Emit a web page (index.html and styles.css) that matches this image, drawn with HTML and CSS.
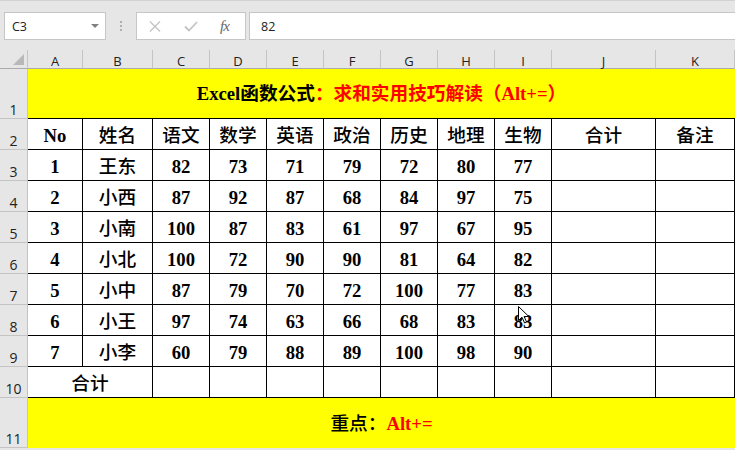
FILE: index.html
```html
<!DOCTYPE html>
<html lang="zh-CN">
<head>
    <meta charset="UTF-8">
    <title>Excel函数公式：求和实用技巧解读</title>
    <link rel="stylesheet" href="styles.css">
</head>
<body>
    <div class="top"></div>
    <div class="fbar">
        <div class="namebox"><span>C3</span><span class="arrow"></span></div>
        <div class="grip"><i></i><i></i><i></i></div>
        <div class="fxbox">
            <svg class="ico-x" width="12" height="11" viewBox="0 0 12 11"><path d="M1 0.5 L11 10.5 M11 0.5 L1 10.5" stroke="#c4c4c4" stroke-width="1.4" fill="none"/></svg>
            <svg class="ico-ok" width="14" height="11" viewBox="0 0 14 11"><path d="M1 5.5 L5 9.5 L13 1" stroke="#c4c4c4" stroke-width="1.8" fill="none"/></svg>
            <span class="fx">fx</span>
        </div>
        <div class="formula">82</div>
    </div>

    <div class="sheet">
        <div class="corner"><svg width="11" height="11" viewBox="0 0 11 11"><polygon points="11,0 11,11 0,11" fill="#b8b8b8"/></svg></div>
        <div class="ch">A</div><div class="ch">B</div><div class="ch">C</div><div class="ch">D</div><div class="ch">E</div><div class="ch">F</div>
        <div class="ch">G</div><div class="ch">H</div><div class="ch">I</div><div class="ch">J</div><div class="ch">K</div>

        <div class="rh">1</div>
        <div class="c title wide">Excel函数公式<span class="red">：求和实用技巧解读（Alt+=）</span></div>

        <div class="rh">2</div>
        <div class="c">No</div><div class="c zh">姓名</div><div class="c zh">语文</div><div class="c zh">数学</div><div class="c zh">英语</div><div class="c zh">政治</div>
        <div class="c zh">历史</div><div class="c zh">地理</div><div class="c zh">生物</div><div class="c zh">合计</div><div class="c zh">备注</div>

        <div class="rh">3</div>
        <div class="c">1</div><div class="c zh">王东</div><div class="c">82</div><div class="c">73</div><div class="c">71</div><div class="c">79</div>
        <div class="c">72</div><div class="c">80</div><div class="c">77</div><div class="c"></div><div class="c"></div>

        <div class="rh">4</div>
        <div class="c">2</div><div class="c zh">小西</div><div class="c">87</div><div class="c">92</div><div class="c">87</div><div class="c">68</div>
        <div class="c">84</div><div class="c">97</div><div class="c">75</div><div class="c"></div><div class="c"></div>

        <div class="rh">5</div>
        <div class="c">3</div><div class="c zh">小南</div><div class="c">100</div><div class="c">87</div><div class="c">83</div><div class="c">61</div>
        <div class="c">97</div><div class="c">67</div><div class="c">95</div><div class="c"></div><div class="c"></div>

        <div class="rh">6</div>
        <div class="c">4</div><div class="c zh">小北</div><div class="c">100</div><div class="c">72</div><div class="c">90</div><div class="c">90</div>
        <div class="c">81</div><div class="c">64</div><div class="c">82</div><div class="c"></div><div class="c"></div>

        <div class="rh">7</div>
        <div class="c">5</div><div class="c zh">小中</div><div class="c">87</div><div class="c">79</div><div class="c">70</div><div class="c">72</div>
        <div class="c">100</div><div class="c">77</div><div class="c">83</div><div class="c"></div><div class="c"></div>

        <div class="rh">8</div>
        <div class="c">6</div><div class="c zh">小王</div><div class="c">97</div><div class="c">74</div><div class="c">63</div><div class="c">66</div>
        <div class="c">68</div><div class="c">83</div><div class="c">83</div><div class="c"></div><div class="c"></div>

        <div class="rh">9</div>
        <div class="c">7</div><div class="c zh">小李</div><div class="c">60</div><div class="c">79</div><div class="c">88</div><div class="c">89</div>
        <div class="c">100</div><div class="c">98</div><div class="c">90</div><div class="c"></div><div class="c"></div>

        <div class="rh">10</div>
        <div class="c zh pair">合计</div><div class="c"></div><div class="c"></div><div class="c"></div><div class="c"></div>
        <div class="c"></div><div class="c"></div><div class="c"></div><div class="c"></div><div class="c"></div>

        <div class="rh">11</div>
        <div class="c foot wide"><span class="zh">重点：</span><span class="red">Alt+=</span></div>
    </div>

    <svg class="cursor" width="12" height="18" viewBox="0 0 12 18"><path d="M0.5 0.5 L0.5 14.5 L4 11.2 L6.6 17 L8.6 16.1 L6.1 10.5 L10.8 10.5 Z" fill="#fff" stroke="#000" stroke-width="1"/></svg>
</body>
</html>
```

FILE: styles.css
```css
body {
    margin: 0;
    width: 735px;
    height: 450px;
    overflow: hidden;
    position: relative;
    background: #e6e6e6;
    font-family: "Open Sans", "Noto Sans", sans-serif;
    color: #222;
}
.top {
    height: 12px;
    box-sizing: border-box;
    border-top: 1px solid #d2d2d2;
}

/* formula bar */
.fbar {
    display: flex;
    height: 28px;
    padding-left: 4px;
}
.namebox {
    width: 102px;
    box-sizing: border-box;
    background: #fff;
    border: 1px solid #c6c6c6;
    display: flex;
    align-items: center;
    justify-content: space-between;
    padding: 0 6px 0 7px;
    font-size: 12.5px;
}
.arrow {
    width: 0;
    height: 0;
    border-left: 4px solid transparent;
    border-right: 4px solid transparent;
    border-top: 4px solid #808080;
}
.grip {
    width: 30px;
    display: flex;
    flex-direction: column;
    align-items: center;
    justify-content: center;
    gap: 2px;
}
.grip i {
    width: 2px;
    height: 2px;
    background: #b0b0b0;
}
.fxbox {
    width: 110px;
    box-sizing: border-box;
    background: #fff;
    border: 1px solid #c6c6c6;
    display: flex;
    align-items: center;
    padding-left: 12px;
}
.ico-ok {
    margin-left: 23px;
}
.fx {
    margin-left: 22px;
    font-family: "Liberation Serif", serif;
    font-style: italic;
    font-size: 15px;
    color: #666;
    letter-spacing: -1px;
}
.formula {
    flex: 1;
    margin-left: 3px;
    background: #fff;
    border: 1px solid #c6c6c6;
    border-right: none;
    padding-left: 11px;
    display: flex;
    align-items: center;
    font-size: 12.5px;
}

/* sheet grid */
.sheet {
    margin-top: 10px;
    display: grid;
    grid-template-columns: 28px 55px 70px repeat(7, 57px) 104px 79px;
    grid-template-rows: 19px 50px repeat(9, 31px) 50px;
}
.sheet > div {
    box-sizing: border-box;
}
.corner {
    display: flex;
    justify-content: flex-end;
    align-items: flex-end;
    padding: 0 3px 3px 0;
    border-right: 1px solid #c4c4c4;
    border-bottom: 1px solid #ababab;
}
.ch {
    text-align: center;
    font-size: 13px;
    line-height: 16px;
    padding-top: 3px;
    border-right: 1px solid #c4c4c4;
    border-bottom: 1px solid #ababab;
}
.rh {
    display: flex;
    justify-content: center;
    align-items: flex-end;
    font-size: 14px;
    line-height: 16px;
    border-right: 1px solid #c4c4c4;
    border-bottom: 1px solid #c4c4c4;
}
.c {
    display: flex;
    justify-content: center;
    align-items: center;
    padding-top: 3px;
    background: #fff;
    border-right: 1px solid #000;
    border-bottom: 1px solid #000;
    font-family: "Liberation Serif", "Noto Sans CJK SC", serif;
    font-weight: bold;
    font-size: 18.67px;
    line-height: 22px;
    color: #000;
}
.zh {
    font-weight: 500;
}
.pair {
    grid-column: span 2;
}
.wide {
    grid-column: span 11;
    background: #ffff00;
    border-right: none;
    padding-top: 0;
}
.title {
    font-weight: bold;
}
.foot {
    border-bottom: none;
    padding-top: 1px;
}
.red {
    color: #ff0000;
    font-weight: bold;
}
.cursor {
    position: absolute;
    left: 518px;
    top: 306px;
}
```
